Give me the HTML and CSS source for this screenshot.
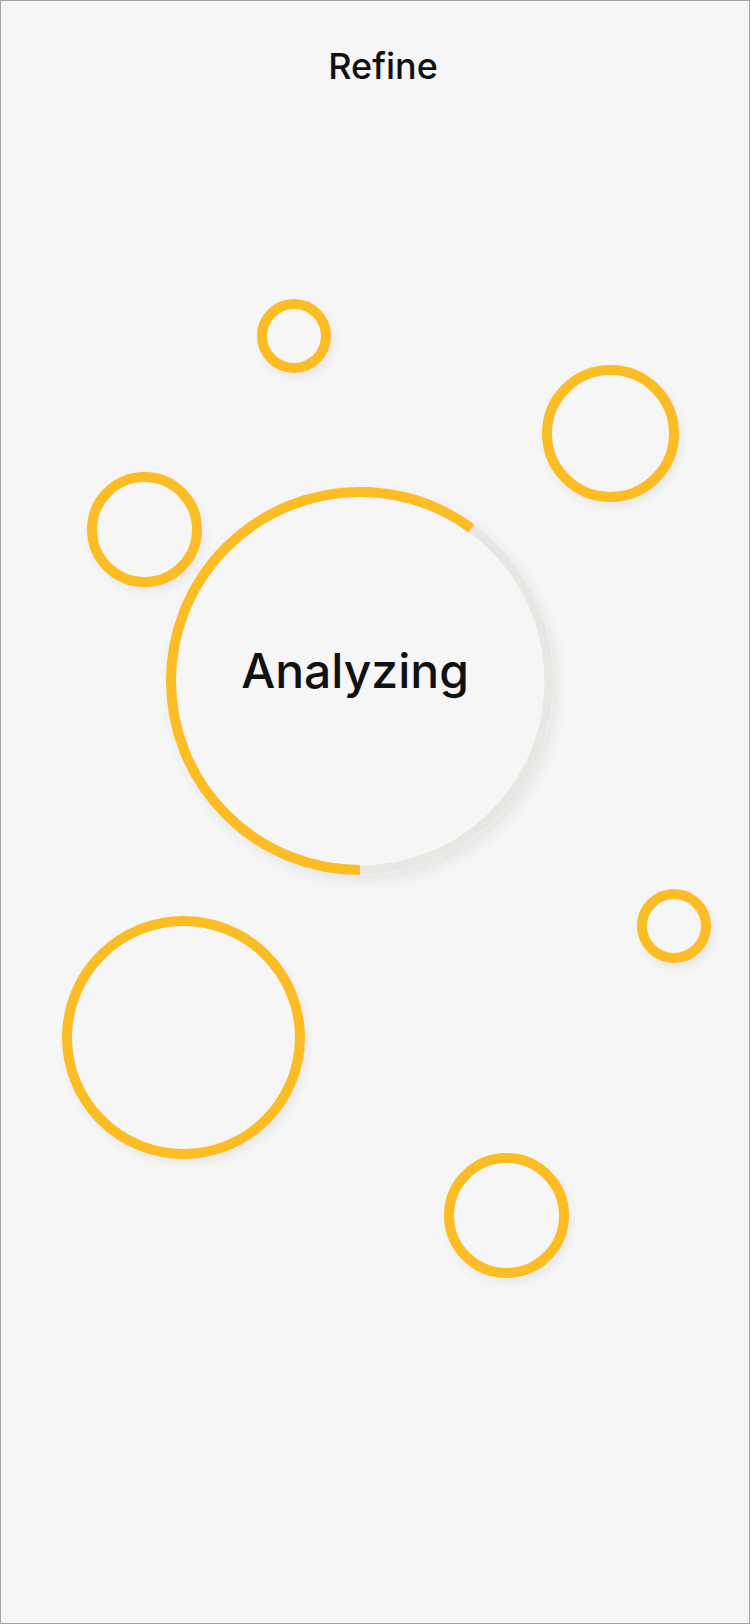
FILE: index.html
```html
<!DOCTYPE html>
<html lang="en">
<head>
<meta charset="utf-8">
<title>Refine</title>
<link rel="stylesheet" href="styles.css">
</head>
<body>
<div class="page">
  <header class="header">
    <h1 class="title">Refine</h1>
  </header>

  <div class="bubble b1"></div>
  <div class="bubble b2"></div>
  <div class="bubble b3"></div>
  <div class="bubble b5"></div>
  <div class="bubble b6"></div>
  <div class="bubble b7"></div>

  <div class="progress">
    <svg class="ring" width="388" height="388" viewBox="0 0 388 388">
      <circle class="track" cx="194" cy="194" r="189"></circle>
      <circle class="bar" cx="194" cy="194" r="189" stroke-dasharray="712.5 1187.5"></circle>
    </svg>
    <div class="label">Analyzing</div>
  </div>
</div>
</body>
</html>
```

FILE: styles.css
```css
* { box-sizing: border-box; }

html, body {
  margin: 0;
  padding: 0;
  background: #f5f5f5;
}

body {
  font-family: Inter, "Noto Sans", "Liberation Sans", sans-serif;
  color: #111;
}

.page {
  position: relative;
  width: 750px;
  height: 1624px;
  border: 1px solid #a3a3a3;
  background: #f6f6f6;
  overflow: hidden;
}

.header {
  display: flex;
  justify-content: center;
  padding-top: 45px;
  padding-left: 16px;
}

.title {
  margin: 0;
  font-size: 36px;
  line-height: 40px;
  font-weight: 500;
  color: #111;
}

.bubble {
  position: absolute;
  border: 10px solid #fbbc24;
  border-radius: 50%;
  box-shadow: 3px 5px 10px rgba(0, 0, 0, 0.06);
}

.b1 { left: 256px; top: 298px; width: 74px; height: 74px; }
.b2 { left: 541px; top: 364px; width: 137px; height: 137px; }
.b3 { left: 86px; top: 471px; width: 115px; height: 115px; }
.b5 { left: 636px; top: 888px; width: 74px; height: 74px; }
.b6 { left: 61px; top: 915px; width: 243px; height: 243px; }
.b7 { left: 443px; top: 1152px; width: 125px; height: 125px; }

.progress {
  position: absolute;
  left: 165px;
  top: 486px;
  width: 388px;
  height: 388px;
  border-radius: 50%;
  box-shadow: 4px 6px 14px rgba(0, 0, 0, 0.07);
  display: flex;
  align-items: center;
  justify-content: center;
}

.ring {
  position: absolute;
  left: 0;
  top: 0;
  transform: rotate(90deg);
}

.track {
  fill: none;
  stroke: #e9e7e3;
  stroke-width: 9;
}

.bar {
  fill: none;
  stroke: #fbbc24;
  stroke-width: 10;
}

.label {
  position: relative;
  font-size: 48px;
  line-height: 50px;
  font-weight: 500;
  color: #111;
  padding-bottom: 20px;
  padding-right: 10px;
}
```
